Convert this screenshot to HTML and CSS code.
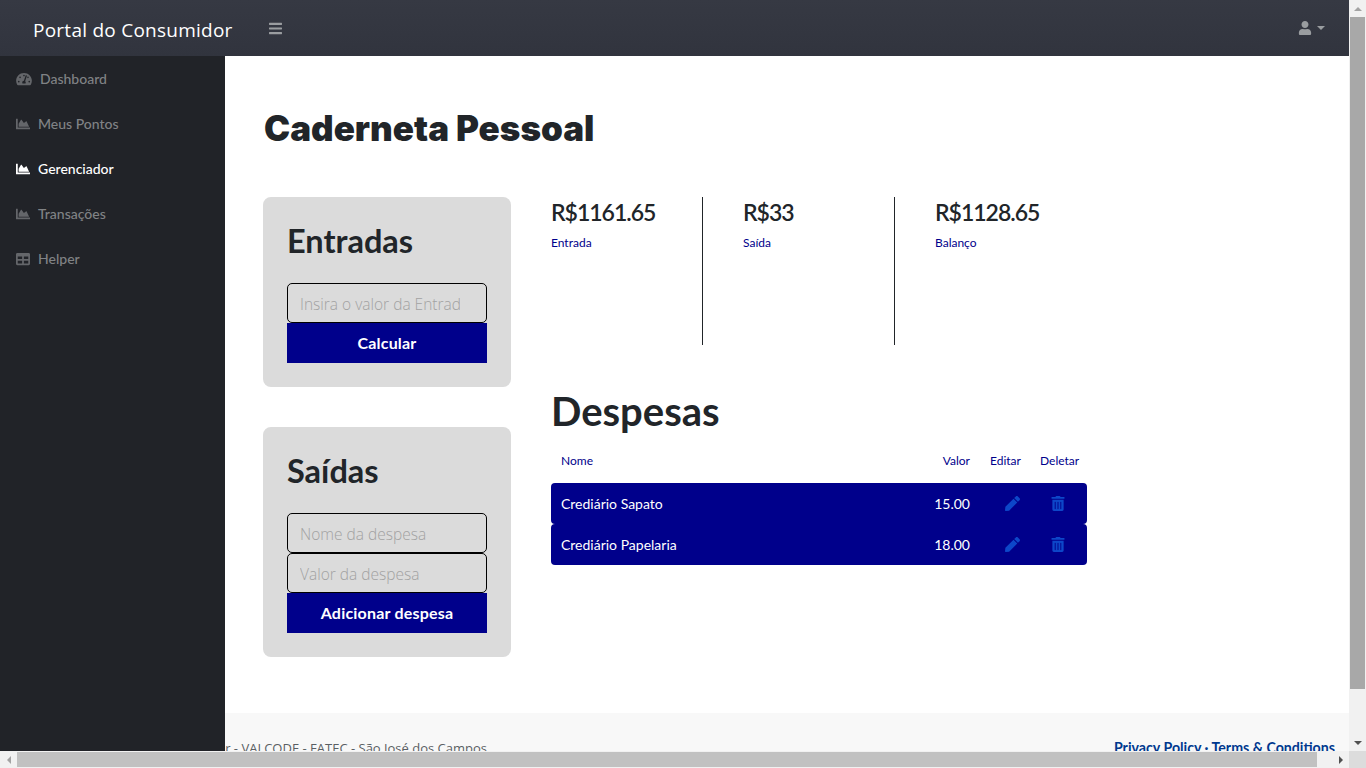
FILE: index.html
```html
<!DOCTYPE html>
<html lang="pt-BR">

<head>
  <meta charset="UTF-8">
  <meta name="viewport" content="width=device-width, initial-scale=1.0">
  <title>Portal do Consumidor</title>
  <link rel="stylesheet" href="styles.css">
</head>

<body>
  <svg class="sprites" xmlns="http://www.w3.org/2000/svg">
    <symbol id="i-gauge" viewBox="0 0 576 512"><path d="M288 32C128.94 32 0 160.94 0 320c0 52.8 14.25 102.26 39.06 144.8 5.61 9.62 16.3 15.2 27.44 15.2h443c11.14 0 21.83-5.58 27.44-15.2C561.75 422.26 576 372.8 576 320c0-159.06-128.94-288-288-288zm0 64c14.71 0 26.58 10.13 30.32 23.65-1.11 2.26-2.64 4.23-3.45 6.67l-9.22 27.67c-5.13 3.49-10.97 6.01-17.64 6.01-17.67 0-32-14.33-32-32S270.33 96 288 96zM96 384c-17.67 0-32-14.33-32-32s14.33-32 32-32 32 14.33 32 32-14.33 32-32 32zm48-160c-17.67 0-32-14.33-32-32s14.33-32 32-32 32 14.33 32 32-14.33 32-32 32zm246.77-72.41l-61.33 184C343.13 347.33 352 364.54 352 384c0 11.72-3.38 22.55-8.88 32H232.88c-5.5-9.45-8.88-20.28-8.88-32 0-33.94 26.5-61.43 59.9-63.59l61.34-184.01c4.17-12.56 17.73-19.45 30.36-15.17 12.57 4.19 19.35 17.79 15.17 30.36zm14.66 57.2l15.52-46.55c3.47-1.29 7.13-2.23 11.05-2.23 17.67 0 32 14.33 32 32s-14.33 32-32 32c-11.38-.01-20.89-6.28-26.57-15.22zM480 384c-17.67 0-32-14.33-32-32s14.33-32 32-32 32 14.33 32 32-14.33 32-32 32z"/></symbol>
    <symbol id="i-chart" viewBox="0 0 512 512"><path d="M500 384c6.6 0 12 5.4 12 12v40c0 6.6-5.4 12-12 12H12c-6.6 0-12-5.4-12-12V76c0-6.6 5.4-12 12-12h40c6.6 0 12 5.4 12 12v308h436zM372.7 159.5L288 216l-85.3-113.7c-5.1-6.8-15.5-6.3-19.9 1L96 248v104h384l-89.9-187.8c-3.2-6.5-11.4-8.7-17.4-4.7z"/></symbol>
    <symbol id="i-table" viewBox="0 0 512 512"><path d="M464 32H48C21.49 32 0 53.49 0 80v352c0 26.51 21.49 48 48 48h416c26.51 0 48-21.49 48-48V80c0-26.51-21.49-48-48-48zM224 416H64v-96h160v96zm0-160H64v-96h160v96zm224 160H288v-96h160v96zm0-160H288v-96h160v96z"/></symbol>
    <symbol id="i-bars" viewBox="0 0 448 512"><path d="M16 132h416c8.837 0 16-7.163 16-16V76c0-8.837-7.163-16-16-16H16C7.163 60 0 67.163 0 76v40c0 8.837 7.163 16 16 16zm0 160h416c8.837 0 16-7.163 16-16v-40c0-8.837-7.163-16-16-16H16c-8.837 0-16 7.163-16 16v40c0 8.837 7.163 16 16 16zm0 160h416c8.837 0 16-7.163 16-16v-40c0-8.837-7.163-16-16-16H16c-8.837 0-16 7.163-16 16v40c0 8.837 7.163 16 16 16z"/></symbol>
    <symbol id="i-user" viewBox="0 0 448 512"><path d="M224 256c70.7 0 128-57.3 128-128S294.7 0 224 0 96 57.3 96 128s57.3 128 128 128zm89.6 32h-16.7c-22.2 10.2-46.9 16-72.9 16s-50.6-5.8-72.9-16h-16.7C60.2 288 0 348.2 0 422.4V464c0 26.5 21.5 48 48 48h352c26.5 0 48-21.5 48-48v-41.6c0-74.2-60.2-134.4-134.4-134.4z"/></symbol>
    <symbol id="i-pen" viewBox="0 0 512 512"><path d="M290.74 93.24l128.02 128.02-277.99 277.99-114.14 12.6C11.35 513.54-1.56 500.62.14 485.34l12.7-114.22 277.9-277.88zm207.2-19.06l-60.11-60.11c-18.75-18.75-49.16-18.75-67.91 0l-56.55 56.55 128.02 128.02 56.55-56.55c18.75-18.76 18.75-49.16 0-67.91z"/></symbol>
    <symbol id="i-trash" viewBox="0 0 448 512"><path d="M32 464a48 48 0 0 0 48 48h288a48 48 0 0 0 48-48V128H32zm272-256a16 16 0 0 1 32 0v224a16 16 0 0 1-32 0zm-96 0a16 16 0 0 1 32 0v224a16 16 0 0 1-32 0zm-96 0a16 16 0 0 1 32 0v224a16 16 0 0 1-32 0zM432 32H312l-9.4-18.7A24 24 0 0 0 281.1 0H166.8a23.72 23.72 0 0 0-21.4 13.3L136 32H16A16 16 0 0 0 0 48v32a16 16 0 0 0 16 16h416a16 16 0 0 0 16-16V48a16 16 0 0 0-16-16z"/></symbol>
  </svg>

  <div class="window">
    <div class="viewport">
      <nav class="topbar">
        <a class="brand" href="#">Portal do Consumidor</a>
        <svg class="icon toggle"><use href="#i-bars"></use></svg>
        <div class="user-menu">
          <svg class="icon"><use href="#i-user"></use></svg>
          <span class="caret"></span>
        </div>
      </nav>

      <div class="body-row">
        <aside class="sidebar">
          <a href="#" class="side-link gauge"><svg class="icon"><use href="#i-gauge"></use></svg>Dashboard</a>
          <a href="#" class="side-link"><svg class="icon"><use href="#i-chart"></use></svg>Meus Pontos</a>
          <a href="#" class="side-link active"><svg class="icon"><use href="#i-chart"></use></svg>Gerenciador</a>
          <a href="#" class="side-link"><svg class="icon"><use href="#i-chart"></use></svg>Transações</a>
          <a href="#" class="side-link"><svg class="icon"><use href="#i-table"></use></svg>Helper</a>
        </aside>

        <div class="page">
          <main class="content">
            <h1 class="page-title">Caderneta Pessoal</h1>
            <div class="columns">
              <div class="forms">
                <form class="card">
                  <h2>Entradas</h2>
                  <input type="text" placeholder="Insira o valor da Entrada">
                  <button type="button">Calcular</button>
                </form>
                <form class="card">
                  <h2>Saídas</h2>
                  <input type="text" placeholder="Nome da despesa">
                  <input type="text" placeholder="Valor da despesa">
                  <button type="button">Adicionar despesa</button>
                </form>
              </div>

              <div class="results">
                <div class="summary">
                  <div class="stat">
                    <div class="stat-value">R$1161.65</div>
                    <div class="stat-label">Entrada</div>
                  </div>
                  <div class="stat">
                    <div class="stat-value">R$33</div>
                    <div class="stat-label">Saída</div>
                  </div>
                  <div class="stat">
                    <div class="stat-value">R$1128.65</div>
                    <div class="stat-label">Balanço</div>
                  </div>
                </div>

                <h2 class="expenses-title">Despesas</h2>
                <div class="expense-head">
                  <span class="col-name">Nome</span>
                  <span class="col-value">Valor</span>
                  <span class="col-edit">Editar</span>
                  <span class="col-del">Deletar</span>
                </div>
                <div class="expense-row">
                  <span class="col-name">Crediário Sapato</span>
                  <span class="col-value">15.00</span>
                  <span class="col-edit"><svg class="icon"><use href="#i-pen"></use></svg></span>
                  <span class="col-del"><svg class="icon"><use href="#i-trash"></use></svg></span>
                </div>
                <div class="expense-row">
                  <span class="col-name">Crediário Papelaria</span>
                  <span class="col-value">18.00</span>
                  <span class="col-edit"><svg class="icon"><use href="#i-pen"></use></svg></span>
                  <span class="col-del"><svg class="icon"><use href="#i-trash"></use></svg></span>
                </div>
              </div>
            </div>
          </main>

          <footer class="footer">
            <span class="copy">Copyright © Portal do Consumidor - VALCODE - FATEC - São José dos Campos</span>
            <span class="legal"><a href="#">Privacy Policy</a> · <a href="#">Terms &amp; Conditions</a></span>
          </footer>
        </div>
      </div>
    </div>

    <div class="scroll-v">
      <span class="arrow up"></span>
      <div class="track-v"><div class="thumb-v"></div></div>
      <span class="arrow down"></span>
    </div>
    <div class="scroll-h">
      <span class="arrow left"></span>
      <div class="track-h"><div class="thumb-h"></div></div>
      <span class="arrow right"></span>
    </div>
    <div class="scroll-corner"></div>
  </div>
</body>

</html>
```

FILE: styles.css
```css
* {
  box-sizing: border-box;
}

html,
body {
  margin: 0;
  height: 100%;
  overflow: hidden;
}

body {
  font-family: "Lato", "Noto Sans", sans-serif;
  font-size: 16px;
  color: #212529;
  background: #fff;
}

a {
  text-decoration: none;
}

.sprites {
  display: none;
}

.icon {
  width: 14px;
  height: 14px;
  fill: currentColor;
  display: block;
}

/* janela + barras de rolagem */
.window {
  display: grid;
  grid-template-columns: 1349px 17px;
  grid-template-rows: 751px 17px;
  height: 768px;
}

.viewport {
  display: flex;
  flex-direction: column;
  overflow: hidden;
}

.scroll-v,
.scroll-h {
  display: flex;
  background: #f1f1f1;
}

.scroll-v {
  flex-direction: column;
}

.scroll-corner {
  background: #dcdcdc;
}

.track-v {
  flex: 1;
  padding-bottom: 45px;
}

.thumb-v {
  height: 100%;
  margin: 0 1px;
  background: #a8a8a8;
}

.track-h {
  flex: 1;
}

.thumb-h {
  height: 100%;
  margin-right: 15px;
  background: #c1c1c1;
  border-top: 1px solid #f1f1f1;
  border-bottom: 1px solid #f1f1f1;
}

.arrow {
  flex: none;
  width: 17px;
  height: 17px;
  display: flex;
  align-items: center;
  justify-content: center;
}

.arrow::before {
  content: "";
  border: 4px solid transparent;
}

.arrow.up::before {
  border-bottom-color: #a3a3a3;
  border-top-width: 0;
}

.arrow.down::before {
  border-top-color: #505050;
  border-bottom-width: 0;
}

.arrow.left::before {
  border-right-color: #a3a3a3;
  border-left-width: 0;
}

.arrow.right::before {
  border-left-color: #505050;
  border-right-width: 0;
}

/* barra superior */
.topbar {
  flex: none;
  height: 56px;
  display: flex;
  align-items: center;
  background: linear-gradient(#363943, #31343e);
  color: #9a9da0;
}

.brand {
  width: 269px;
  padding: 3px 0 0 33px;
  font-family: "Open Sans", "Noto Sans", sans-serif;
  font-size: 19px;
  letter-spacing: 0.25px;
  color: #fff;
}

.toggle {
  width: 13px;
  height: 15px;
}

.user-menu {
  margin-left: auto;
  margin-right: 24px;
  display: flex;
  align-items: center;
  gap: 5px;
}

.caret {
  border-top: 4px solid #9a9da0;
  border-left: 4px solid transparent;
  border-right: 4px solid transparent;
}

.body-row {
  flex: 1;
  display: flex;
  min-height: 0;
}

/* menu lateral */
.sidebar {
  flex: none;
  width: 225px;
  background: #212328;
  display: flex;
  flex-direction: column;
  position: relative;
  z-index: 1;
}

.side-link {
  height: 45px;
  padding-left: 16px;
  display: flex;
  align-items: center;
  gap: 8px;
  font-size: 14px;
  font-weight: 500;
  color: #808285;
}

.side-link .icon {
  color: #64666a;
}

.side-link.gauge .icon {
  width: 16px;
}

.side-link.active,
.side-link.active .icon {
  color: #fff;
}

/* conteudo */
.page {
  flex: 1;
  display: flex;
  flex-direction: column;
  min-width: 0;
}

.content {
  flex: none;
  height: 657px;
  padding: 48px 39px 0;
}

.page-title {
  margin: 0 0 45px;
  height: 48px;
  line-height: 49px;
  font-family: "Inter", "Lato", sans-serif;
  font-size: 35px;
  font-weight: 900;
}

.columns {
  display: flex;
  gap: 40px;
  margin-left: -1px;
}

.forms {
  width: 248px;
  display: flex;
  flex-direction: column;
  gap: 40px;
}

.card {
  padding: 24px;
  background: #dbdbdb;
  border-radius: 8px;
  display: flex;
  flex-direction: column;
}

.card h2 {
  margin: 0 0 20px;
  height: 42px;
  line-height: 40px;
  font-size: 32.5px;
  font-weight: 700;
}

.card input {
  width: 200px;
  height: 40px;
  padding: 2px 26px 0 12px;
  border: 1px solid #000;
  border-radius: 5px;
  background: transparent;
  font-family: "Open Sans", "Noto Sans", sans-serif;
  font-size: 15.5px;
  font-weight: 300;
  outline: none;
}

.card input::placeholder {
  color: #a2a2a2;
}

.card button {
  width: 200px;
  height: 40px;
  padding: 0 0 2px;
  border: none;
  background: #00008b;
  color: #fff;
  font-family: inherit;
  font-size: 16px;
  font-weight: 700;
  letter-spacing: 0.2px;
}

.results {
  width: 536px;
}

.summary {
  display: flex;
  height: 148px;
  margin-bottom: 40px;
}

.stat {
  width: 192px;
}

.stat + .stat {
  padding-left: 40px;
}

.stat:first-child,
.stat:nth-child(2) {
  border-right: 1px solid #212529;
}

.stat:first-child {
  width: 152px;
}

.stat-value {
  height: 32px;
  line-height: 31px;
  font-size: 23px;
  font-weight: 600;
  letter-spacing: -1px;
}

.stat-label {
  margin-top: 6px;
  font-size: 12px;
  color: #00008b;
}

.expenses-title {
  margin: 0 0 12px;
  height: 52px;
  line-height: 52px;
  font-size: 40px;
  font-weight: 700;
}

.expense-head,
.expense-row {
  display: flex;
  align-items: center;
  padding-left: 10px;
}

.expense-head {
  height: 22px;
  margin-bottom: 12px;
  font-size: 12px;
  color: #00008b;
}

.expense-row {
  height: 41px;
  background: #00008b;
  border-radius: 4px;
  font-size: 14px;
  color: #fff;
}

.col-name {
  flex: 1;
}

.col-value {
  width: 60px;
  text-align: right;
}

.col-edit {
  width: 70px;
  padding-left: 20px;
}

.col-del {
  width: 47px;
}

.expense-row .col-edit {
  padding-left: 35px;
}

.expense-row .col-del {
  padding-left: 11px;
}

.expense-row .icon {
  width: 15px;
  height: 15px;
  color: #0d47c9;
}

.expense-row .col-del .icon {
  width: 14px;
}

/* rodape */
.footer {
  flex: 1;
  margin-left: -225px;
  padding: 26px 14px 0 0;
  background: #f8f8f8;
  display: flex;
  justify-content: space-between;
  font-size: 14.2px;
  overflow: hidden;
}

.copy {
  margin-left: 21px;
  font-family: "Open Sans", "Noto Sans", sans-serif;
  font-size: 13px;
  color: #5a5f64;
}

.legal {
  font-weight: 700;
  color: #00388f;
}

.legal a {
  color: #00388f;
}
```
